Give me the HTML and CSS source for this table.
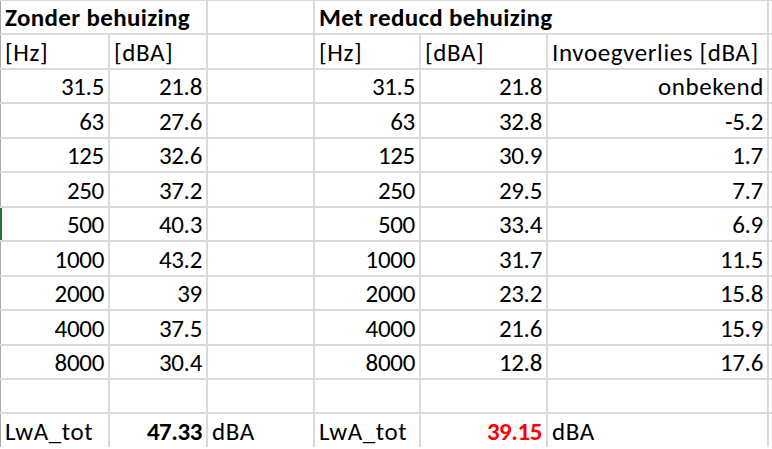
FILE: index.html
```html
<!DOCTYPE html>
<html>
<head>
<meta charset="utf-8">
<link rel="stylesheet" href="styles.css">
</head>
<body>
<div class="sheet">
  <div class="c l bt span2 first">Zonder behuizing</div>
  <div class="c"></div>
  <div class="c l bt span3">Met reducd behuizing</div>
  <div class="c"></div>

  <div class="c l t first">[Hz]</div><div class="c l t">[dBA]</div><div class="c"></div>
  <div class="c l t">[Hz]</div><div class="c l t">[dBA]</div><div class="c l t">Invoegverlies [dBA]</div><div class="c"></div>

  <div class="c r n first">31.5</div><div class="c r n">21.8</div><div class="c"></div>
  <div class="c r n">31.5</div><div class="c r n">21.8</div><div class="c r t">onbekend</div><div class="c"></div>

  <div class="c r n first">63</div><div class="c r n">27.6</div><div class="c"></div>
  <div class="c r n">63</div><div class="c r n">32.8</div><div class="c r n">-5.2</div><div class="c"></div>

  <div class="c r n first">125</div><div class="c r n">32.6</div><div class="c"></div>
  <div class="c r n">125</div><div class="c r n">30.9</div><div class="c r n">1.7</div><div class="c"></div>

  <div class="c r n first">250</div><div class="c r n">37.2</div><div class="c"></div>
  <div class="c r n">250</div><div class="c r n">29.5</div><div class="c r n">7.7</div><div class="c"></div>

  <div class="c r n first sel">500</div><div class="c r n">40.3</div><div class="c"></div>
  <div class="c r n">500</div><div class="c r n">33.4</div><div class="c r n">6.9</div><div class="c"></div>

  <div class="c r n first">1000</div><div class="c r n">43.2</div><div class="c"></div>
  <div class="c r n">1000</div><div class="c r n">31.7</div><div class="c r n">11.5</div><div class="c"></div>

  <div class="c r n first">2000</div><div class="c r n">39</div><div class="c"></div>
  <div class="c r n">2000</div><div class="c r n">23.2</div><div class="c r n">15.8</div><div class="c"></div>

  <div class="c r n first">4000</div><div class="c r n">37.5</div><div class="c"></div>
  <div class="c r n">4000</div><div class="c r n">21.6</div><div class="c r n">15.9</div><div class="c"></div>

  <div class="c r n first">8000</div><div class="c r n">30.4</div><div class="c"></div>
  <div class="c r n">8000</div><div class="c r n">12.8</div><div class="c r n">17.6</div><div class="c"></div>

  <div class="c first"></div><div class="c"></div><div class="c"></div>
  <div class="c"></div><div class="c"></div><div class="c"></div><div class="c"></div>

  <div class="c l t first">LwA_tot</div><div class="c r nb">47.33</div><div class="c l t">dBA</div>
  <div class="c l t">LwA_tot</div><div class="c r nb red">39.15</div><div class="c l t">dBA</div><div class="c"></div>
</div>
</body>
</html>
```

FILE: styles.css
```css
html, body {
  margin: 0;
  padding: 0;
  background: #ffffff;
}

.sheet {
  display: grid;
  grid-template-columns: 108px 96px 105px 104px 125px 219px 10px;
  grid-template-rows: repeat(13, 32.46px);
  gap: 2px;
  padding-top: 1px;
  background: #dadada;
  width: 800px;
  overflow: hidden;
  font-family: Carlito, Lato, sans-serif;
  font-size: 25px;
  color: #000000;
}

.c {
  background: #ffffff;
  display: flex;
  align-items: flex-end;
  padding: 0 4px 2px 4px;
  line-height: 26px;
  white-space: nowrap;
  overflow: visible;
}

.first {
  border-left: 1px solid #a8a8a8;
  padding-left: 4px;
}

.sel {
  border-left: 2px solid #217346;
  padding-left: 3px;
}

.l { justify-content: flex-start; }
.r { justify-content: flex-end; }

.t { letter-spacing: 0.6px; }
.t.r { padding-right: 3px; }
.n { letter-spacing: -0.3px; }
.bt { font-weight: 700; letter-spacing: 0.35px; }
.nb { font-weight: 700; letter-spacing: -0.45px; }
.red { color: #ff0000; }

.span2 { grid-column: span 2; }
.span3 { grid-column: span 3; }
```
